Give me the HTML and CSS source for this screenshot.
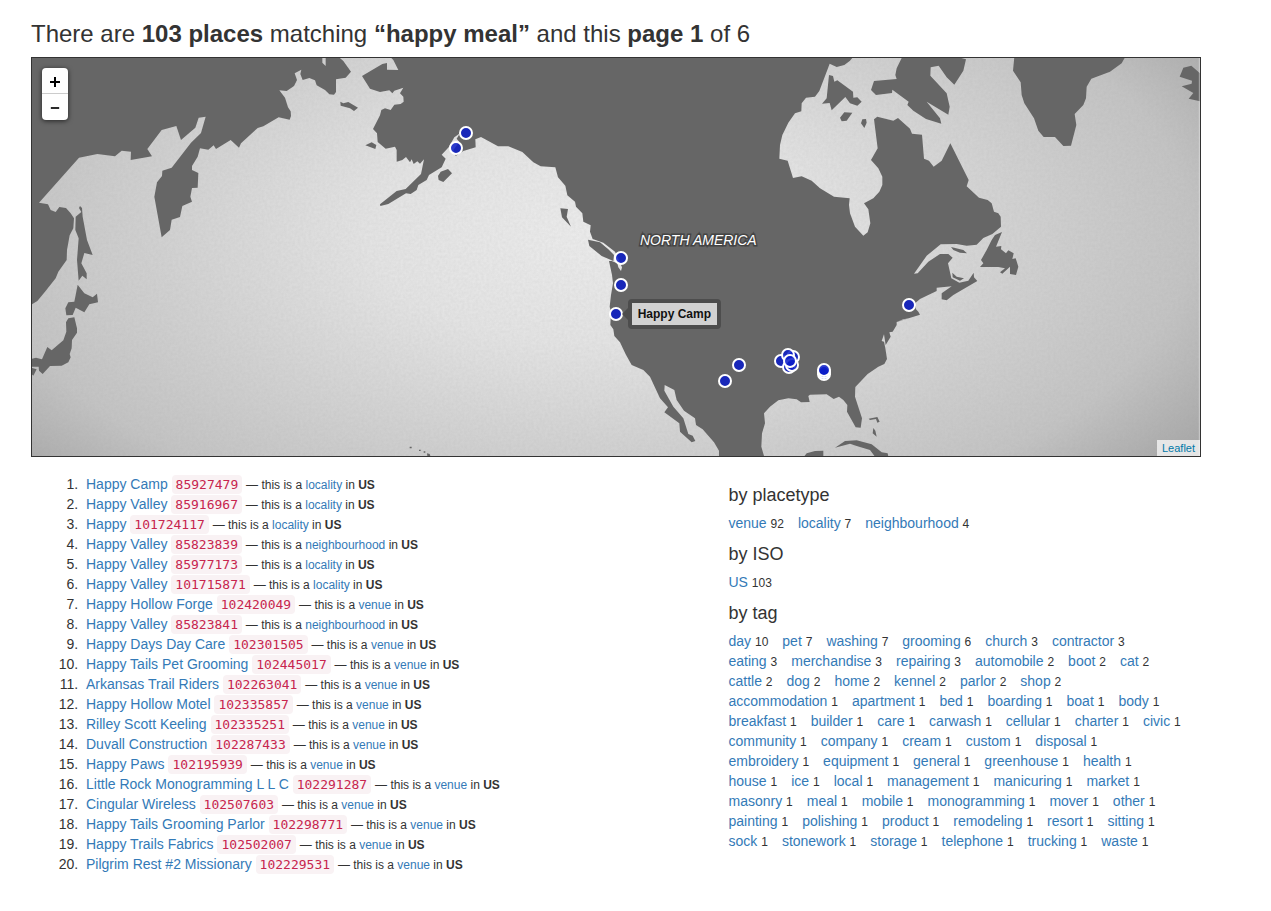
FILE: index.html
```html
<!DOCTYPE html>
<html lang="en">
<head>
<meta charset="utf-8">
<title>Places matching “happy meal”</title>
<link rel="stylesheet" href="styles.css">
</head>
<body>
<main class="page">
<h1 class="title">There are <strong>103 places</strong> matching <strong>“happy meal”</strong> and this <strong>page 1</strong> of 6</h1>

<section class="map" aria-label="Map of results">
<svg class="map-canvas" viewBox="36 24 3504 1194" role="img" aria-label="North Pacific and North America">
<defs>
<radialGradient id="ocean" gradientUnits="userSpaceOnUse" cx="0" cy="0" r="2200" gradientTransform="translate(1710 550) scale(1 .5)">
<stop offset="0" stop-color="#ebebeb"/><stop offset=".3" stop-color="#e3e3e3"/><stop offset=".55" stop-color="#d3d3d3"/><stop offset=".82" stop-color="#c3c3c3"/><stop offset="1" stop-color="#a9a9a9"/>
</radialGradient>
<filter id="grain" x="0" y="0" width="100%" height="100%">
<feTurbulence type="fractalNoise" baseFrequency=".12" numOctaves="2" seed="4"/>
<feColorMatrix values="0 0 0 0 .3  0 0 0 0 .3  0 0 0 0 .3  .16 0 0 0 -.04"/>
</filter>
</defs>
<rect x="36" y="24" width="3504" height="1194" fill="url(#ocean)"/>
<rect x="36" y="24" width="3504" height="1194" filter="url(#grain)"/>
<g fill="#666">
<path d="M30 20V766L52 753 75 725 107 685 115 665 140 630 141 600 149 556 160 535 162 505 152 490 138 474 118 471 107 486 92 480 84 463 57 458 177 323 232 312 285 319 305 302 333 305 332 330 396 319 382 297 425 240 469 228 483 270 526 233 536 203 557 200 543 249 513 278 455 353 427 362 426 378 411 397 403 440 425 562 450 540 455 509 480 501 487 468 516 455 511 440 516 414 533 413 535 369 516 360 516 348 533 320 540 295 565 299 581 286 588 297 632 270 657 293 663 280 713 234 730 229 776 202 809 209 813 198 812 184 804 172 795 143 778 121 800 123 822 108 831 90 824 70 844 59 841 72 848 90 868 84 885 91 890 106 915 120 928 133 942 134 948 126 948 88 977 83 993 65 970 33 955 20 917 20 917 48 907 38 907 20Z"/>
<path d="M180 468 186 474 188 500 201 570 218 615 193 609 184 640 200 670 200 688 187 677 176 692 171 630 176 565 166 540 167 500 184 486 177 474Z"/>
<path d="M173 704 193 730 218 742 231 731 234 757 208 763 193 787 167 773 158 795 139 796 136 775 145 757 163 755Z"/>
<path d="M145 805 163 802 171 835 171 848 156 870 155 895 149 912 152 922 145 937 125 947 90 948 68 972 57 962 56 950 34 950 34 927 48 923 66 928 82 891 95 901 130 871 139 845 138 817Z"/>
<path d="M34 953 50 958 40 977 34 972Z"/>
<path d="M1110 20 1120 30 1135 60 1101 59 1101 39 1087 42 1026 78 1050 116 1080 126 1108 121 1117 130 1123 122 1150 113 1140 130 1150 140 1151 155 1142 162 1123 164 1112 180 1095 175 1084 180 1080 196 1059 237 1071 250 1073 276 1097 296 1125 290 1130 300 1130 335 1147 330 1158 321 1170 337 1175 328 1181 342 1192 334 1200 341 1212 328 1203 372 1157 417 1130 423 1080 463 1081 468 1105 462 1158 430 1172 432 1190 420 1195 405 1220 390 1227 375 1265 352 1277 326 1265 314 1286 292 1303 262 1320 250 1310 266 1318 276 1300 300 1307 318 1330 303 1367 292 1366 268 1383 261 1434 289 1465 289 1507 306 1540 337 1562 349 1606 352 1614 382 1636 407 1642 436 1665 455 1668 470 1687 490 1690 515 1712 526 1710 545 1718 567 1750 578 1785 605 1806 652 1803 663 1795 652 1792 640 1775 633 1767 633 1776 675 1779 700 1773 735 1769 770 1773 785 1771 825 1780 838 1783 858 1800 877 1817 913 1835 945 1870 960 1890 980 1920 1045 1944 1072 1933 1087 1978 1120 1980 1145 2015 1177 2026 1173 2018 1157 2005 1152 1990 1105 1960 1070 1933 1022 1934 1005 1963 1020 1970 1050 1992 1082 2025 1105 2028 1125 2048 1138 2082 1177 2097 1202 2097 1225 2234 1225 2224 1190 2226 1150 2235 1120 2232 1090 2250 1070 2275 1051 2305 1045 2330 1048 2343 1057 2369 1056 2365 1038 2370 1034 2420 1033 2441 1047 2457 1040 2470 1050 2482 1065 2481 1085 2507 1132 2522 1133 2526 1105 2505 1040 2506 1011 2543 972 2575 950 2593 942 2601 927 2596 895 2592 875 2585 873 2592 853 2597 885 2612 860 2608 847 2618 845 2630 825 2630 816 2700 794 2695 785 2688 778 2685 760 2700 747 2750 723 2750 713 2795 709 2765 730 2765 748 2780 751 2800 735 2872 693 2862 682 2861 668 2845 692 2818 698 2794 685 2784 640 2798 623 2785 612 2760 612 2725 635 2693 670 2682 671 2720 617 2762 583 2810 582 2840 587 2870 584 2890 564 2917 552 2943 530 2942 500 2935 490 2922 485 2915 460 2903 450 2877 443 2840 409 2846 390 2791 280 2765 332 2741 350 2727 332 2712 326 2706 254 2676 251 2670 236 2634 204 2620 212 2572 200 2562 208 2573 295 2553 330 2575 355 2587 380 2587 405 2578 425 2560 445 2532 460 2545 478 2551 520 2543 547 2530 557 2505 530 2490 490 2487 465 2489 445 2442 440 2400 415 2375 392 2345 379 2319 384 2303 332 2278 326 2280 285 2287 255 2305 218 2325 190 2344 184 2345 160 2358 143 2385 140 2398 123 2408 97 2429 41 2450 51 2473 45 2490 32 2500 20Z"/>
<path d="M2647 20 2630 55 2626 75 2630 87 2562 93 2553 120 2568 135 2616 129 2617 119 2666 155 2662 165 2680 182 2718 207 2764 221 2760 205 2720 155 2785 194 2789 170 2780 130 2731 77 2732 52 2756 47 2780 82 2803 104 2830 62 2838 28 2810 20Z"/>
<path d="M2427 75 2439 78 2443 95 2452 91 2499 125 2500 143 2512 142 2525 155 2512 167 2490 160 2476 141 2435 181 2429 159 2406 161 2420 145Z"/>
<path d="M2473 187 2497 188 2480 212 2465 214 2460 203ZM2527 208 2538 207 2540 218 2533 234 2523 220Z"/>
<path d="M2983 20 2979 62 3002 97 3005 135 3013 160 3042 205 3055 242 3071 261 3105 261 3130 288 3153 287 3169 225 3164 192 3190 165 3198 145 3200 110 3214 86 3270 65 3305 40 3316 20Z"/>
<path d="M3540 70 3514 47 3490 53 3479 80 3516 92 3515 101 3485 109 3520 129 3506 146 3540 154Z"/>
<path d="M2946 546 2928 590 2944 588 2943 598 2958 610 2965 601 2981 610 2977 627 2987 625 2995 650 2988 675 2970 672 2970 650 2947 671 2940 667 2955 655 2935 651 2880 651 2890 640 2883 630 2900 600 2915 570 2925 555Z"/>
<path d="M2793 591 2830 600 2841 610 2820 608 2800 600ZM2797 668 2810 680 2832 685 2820 692 2798 682Z"/>
<path d="M2445 1193 2475 1173 2510 1171 2555 1183 2585 1207 2603 1210 2605 1220 2565 1220 2550 1200 2510 1188 2490 1181ZM2352 1220 2360 1210 2385 1203 2410 1202V1220Z"/>
<path d="M2546 1106 2572 1101 2579 1115 2572 1118 2568 1107 2550 1110ZM2560 1134 2566 1142 2570 1160 2558 1150Z"/>
<path d="M1704 569 1740 577 1765 598 1782 615 1780 633 1745 618 1708 588ZM1621 475 1644 477 1640 500 1653 530 1626 502Z"/>
<path d="M1254 378 1262 365 1284 357 1296 370 1270 396 1256 390ZM1036 286 1055 277 1069 285 1066 297ZM961 155 970 160 985 156 1014 173 1002 183 990 175 962 167Z"/>
<path d="M1169 1190h6v5h-6zM1197 1199h5v4h-5zM1211 1204h5v4h-5zM1221 1210 1229 1212 1231 1218 1222 1218Z"/>
</g>
<path d="M2635 814 2668 805 2650 808Z" fill="#d5d5d5"/>
<path d="M3538 24V1218" class="tile-edge"/>
<g transform="scale(3) translate(-20 -50)">
<text class="map-label" x="640" y="245">NORTH AMERICA</text>
<g class="pins">
<circle cx="466" cy="133" r="6"/><circle cx="456" cy="148" r="6"/>
<circle cx="621" cy="258" r="6"/><circle cx="621" cy="285" r="6"/><circle cx="616" cy="314" r="6"/>
<circle cx="725" cy="381" r="6"/><circle cx="739" cy="365" r="6"/><circle cx="781" cy="361" r="6"/>
<circle cx="793" cy="357" r="6"/><circle cx="788" cy="355" r="6"/><circle cx="789" cy="367" r="6"/><circle cx="792" cy="365" r="6"/><circle cx="790" cy="361" r="6"/>
<circle cx="824" cy="374" r="6"/><circle cx="824" cy="372" r="6"/><circle cx="824" cy="370" r="6"/>
<circle cx="909" cy="305" r="6"/>
</g>
</g>
</svg>
<div class="zoom"><button type="button" aria-label="Zoom in"><svg viewBox="0 0 12 12"><path d="M1 6h10M6 1v10"/></svg></button><button type="button" aria-label="Zoom out"><svg viewBox="0 0 12 12"><path d="M1 6h10"/></svg></button></div>
<div class="tooltip">Happy Camp</div>
<div class="attribution"><a href="#">Leaflet</a></div>
</section>

<div class="row">
<ol class="results">
<li><a href="#">Happy Camp</a> <code>85927479</code> <small>— this is a <a href="#">locality</a> in <strong>US</strong></small></li>
<li><a href="#">Happy Valley</a> <code>85916967</code> <small>— this is a <a href="#">locality</a> in <strong>US</strong></small></li>
<li><a href="#">Happy</a> <code>101724117</code> <small>— this is a <a href="#">locality</a> in <strong>US</strong></small></li>
<li><a href="#">Happy Valley</a> <code>85823839</code> <small>— this is a <a href="#">neighbourhood</a> in <strong>US</strong></small></li>
<li><a href="#">Happy Valley</a> <code>85977173</code> <small>— this is a <a href="#">locality</a> in <strong>US</strong></small></li>
<li><a href="#">Happy Valley</a> <code>101715871</code> <small>— this is a <a href="#">locality</a> in <strong>US</strong></small></li>
<li><a href="#">Happy Hollow Forge</a> <code>102420049</code> <small>— this is a <a href="#">venue</a> in <strong>US</strong></small></li>
<li><a href="#">Happy Valley</a> <code>85823841</code> <small>— this is a <a href="#">neighbourhood</a> in <strong>US</strong></small></li>
<li><a href="#">Happy Days Day Care</a> <code>102301505</code> <small>— this is a <a href="#">venue</a> in <strong>US</strong></small></li>
<li><a href="#">Happy Tails Pet Grooming</a> <code>102445017</code> <small>— this is a <a href="#">venue</a> in <strong>US</strong></small></li>
<li><a href="#">Arkansas Trail Riders</a> <code>102263041</code> <small>— this is a <a href="#">venue</a> in <strong>US</strong></small></li>
<li><a href="#">Happy Hollow Motel</a> <code>102335857</code> <small>— this is a <a href="#">venue</a> in <strong>US</strong></small></li>
<li><a href="#">Rilley Scott Keeling</a> <code>102335251</code> <small>— this is a <a href="#">venue</a> in <strong>US</strong></small></li>
<li><a href="#">Duvall Construction</a> <code>102287433</code> <small>— this is a <a href="#">venue</a> in <strong>US</strong></small></li>
<li><a href="#">Happy Paws</a> <code>102195939</code> <small>— this is a <a href="#">venue</a> in <strong>US</strong></small></li>
<li><a href="#">Little Rock Monogramming L L C</a> <code>102291287</code> <small>— this is a <a href="#">venue</a> in <strong>US</strong></small></li>
<li><a href="#">Cingular Wireless</a> <code>102507603</code> <small>— this is a <a href="#">venue</a> in <strong>US</strong></small></li>
<li><a href="#">Happy Tails Grooming Parlor</a> <code>102298771</code> <small>— this is a <a href="#">venue</a> in <strong>US</strong></small></li>
<li><a href="#">Happy Trails Fabrics</a> <code>102502007</code> <small>— this is a <a href="#">venue</a> in <strong>US</strong></small></li>
<li><a href="#">Pilgrim Rest #2 Missionary</a> <code>102229531</code> <small>— this is a <a href="#">venue</a> in <strong>US</strong></small></li>
</ol>
<aside class="facets">
<h2>by placetype</h2>
<ul>
<li><a href="#">venue</a> <small>92</small></li><li><a href="#">locality</a> <small>7</small></li><li><a href="#">neighbourhood</a> <small>4</small></li>
</ul>
<h2>by ISO</h2>
<ul>
<li><a href="#">US</a> <small>103</small></li>
</ul>
<h2>by tag</h2>
<ul>
<li><a href="#">day</a> <small>10</small></li><li><a href="#">pet</a> <small>7</small></li><li><a href="#">washing</a> <small>7</small></li><li><a href="#">grooming</a> <small>6</small></li><li><a href="#">church</a> <small>3</small></li><li><a href="#">contractor</a> <small>3</small></li>
<li><a href="#">eating</a> <small>3</small></li><li><a href="#">merchandise</a> <small>3</small></li><li><a href="#">repairing</a> <small>3</small></li><li><a href="#">automobile</a> <small>2</small></li><li><a href="#">boot</a> <small>2</small></li><li><a href="#">cat</a> <small>2</small></li>
<li><a href="#">cattle</a> <small>2</small></li><li><a href="#">dog</a> <small>2</small></li><li><a href="#">home</a> <small>2</small></li><li><a href="#">kennel</a> <small>2</small></li><li><a href="#">parlor</a> <small>2</small></li><li><a href="#">shop</a> <small>2</small></li>
<li><a href="#">accommodation</a> <small>1</small></li><li><a href="#">apartment</a> <small>1</small></li><li><a href="#">bed</a> <small>1</small></li><li><a href="#">boarding</a> <small>1</small></li><li><a href="#">boat</a> <small>1</small></li><li><a href="#">body</a> <small>1</small></li>
<li><a href="#">breakfast</a> <small>1</small></li><li><a href="#">builder</a> <small>1</small></li><li><a href="#">care</a> <small>1</small></li><li><a href="#">carwash</a> <small>1</small></li><li><a href="#">cellular</a> <small>1</small></li><li><a href="#">charter</a> <small>1</small></li><li><a href="#">civic</a> <small>1</small></li>
<li><a href="#">community</a> <small>1</small></li><li><a href="#">company</a> <small>1</small></li><li><a href="#">cream</a> <small>1</small></li><li><a href="#">custom</a> <small>1</small></li><li><a href="#">disposal</a> <small>1</small></li>
<li><a href="#">embroidery</a> <small>1</small></li><li><a href="#">equipment</a> <small>1</small></li><li><a href="#">general</a> <small>1</small></li><li><a href="#">greenhouse</a> <small>1</small></li><li><a href="#">health</a> <small>1</small></li>
<li><a href="#">house</a> <small>1</small></li><li><a href="#">ice</a> <small>1</small></li><li><a href="#">local</a> <small>1</small></li><li><a href="#">management</a> <small>1</small></li><li><a href="#">manicuring</a> <small>1</small></li><li><a href="#">market</a> <small>1</small></li>
<li><a href="#">masonry</a> <small>1</small></li><li><a href="#">meal</a> <small>1</small></li><li><a href="#">mobile</a> <small>1</small></li><li><a href="#">monogramming</a> <small>1</small></li><li><a href="#">mover</a> <small>1</small></li><li><a href="#">other</a> <small>1</small></li>
<li><a href="#">painting</a> <small>1</small></li><li><a href="#">polishing</a> <small>1</small></li><li><a href="#">product</a> <small>1</small></li><li><a href="#">remodeling</a> <small>1</small></li><li><a href="#">resort</a> <small>1</small></li><li><a href="#">sitting</a> <small>1</small></li>
<li><a href="#">sock</a> <small>1</small></li><li><a href="#">stonework</a> <small>1</small></li><li><a href="#">storage</a> <small>1</small></li><li><a href="#">telephone</a> <small>1</small></li><li><a href="#">trucking</a> <small>1</small></li><li><a href="#">waste</a> <small>1</small></li>
</ul>
</aside>
</div>
</main>
</body>
</html>
```
FILE: styles.css
```css
* { box-sizing: border-box; }
body {
  margin: 0;
  background: #fff;
  color: #333;
  font: 14px/20px "Liberation Sans", Arial, sans-serif;
}
a { color: #337ab7; text-decoration: none; }
a:hover { text-decoration: underline; }
small { font-size: 12px; line-height: 1; }

.page { padding: 20px 70px 20px 31px; }
.title { margin: 0 0 10px; font-size: 24px; line-height: 27px; font-weight: 400; }

.map { position: relative; border: 1px solid #333; overflow: hidden; }
.map-canvas { display: block; width: 100%; height: auto; }
.tile-edge { stroke: #eee; stroke-width: 3; opacity: .5; }
.map-label {
  fill: #fff;
  stroke: #444;
  stroke-width: 3px;
  paint-order: stroke;
  font-size: 14px;
  font-style: italic;
}
.pins circle { fill: #0a1cc8; fill-opacity: .85; stroke: #fff; stroke-width: 2px; }

.zoom {
  position: absolute;
  left: 10px;
  top: 10px;
  width: 26px;
  border-radius: 4px;
  background: #fff;
  box-shadow: 0 1px 5px rgba(0, 0, 0, .65);
}
.zoom button {
  display: grid;
  place-items: center;
  width: 100%;
  height: 26px;
  padding: 0;
  border: 0;
  background: none;
}
.zoom button:first-child { border-bottom: 1px solid #ccc; }
.zoom svg { width: 12px; height: 12px; margin-top: 2px; fill: none; stroke: #000; stroke-width: 2; }
.zoom button:last-child svg { width: 10px; }

.tooltip {
  position: absolute;
  left: 51%;
  top: 60.5%;
  padding: 1px 6px;
  border: 4px solid #4d4d4d;
  border-radius: 4px;
  background: #d2d2d2;
  background-clip: padding-box;
  color: #111;
  font-size: 12px;
  font-weight: 700;
  white-space: nowrap;
}
.tooltip::before {
  content: "";
  position: absolute;
  right: 100%;
  top: 50%;
  margin: -6px 4px 0 0;
  border: 6px solid transparent;
  border-left: 0;
  border-right-color: #4d4d4d;
}
.attribution {
  position: absolute;
  right: 0;
  bottom: 0;
  padding: 0 5px;
  background: rgba(255, 255, 255, .7);
  font-size: 11px;
  line-height: 16px;
}
.attribution a { color: #0078a8; }

.row { display: grid; grid-template-columns: 7fr 5fr; }
.results { margin: 17px 0 0; padding: 0 15px 0 55px; }
.results li::marker { content: counter(list-item) ".\00a0\00a0"; }
code {
  padding: 2px 4px;
  border-radius: 4px;
  background: #f9f2f4;
  color: #c7254e;
  font: 13px/1 "DejaVu Sans Mono", monospace;
}
.facets { padding: 17px 18px 0 15px; }
.facets h2 { margin: 11px 0 8px; font-size: 18px; line-height: 20px; font-weight: 400; }
.facets ul {
  display: flex;
  flex-wrap: wrap;
  column-gap: 14px;
  margin: 0;
  padding: 0;
  list-style: none;
}
.facets li { white-space: nowrap; }
```
